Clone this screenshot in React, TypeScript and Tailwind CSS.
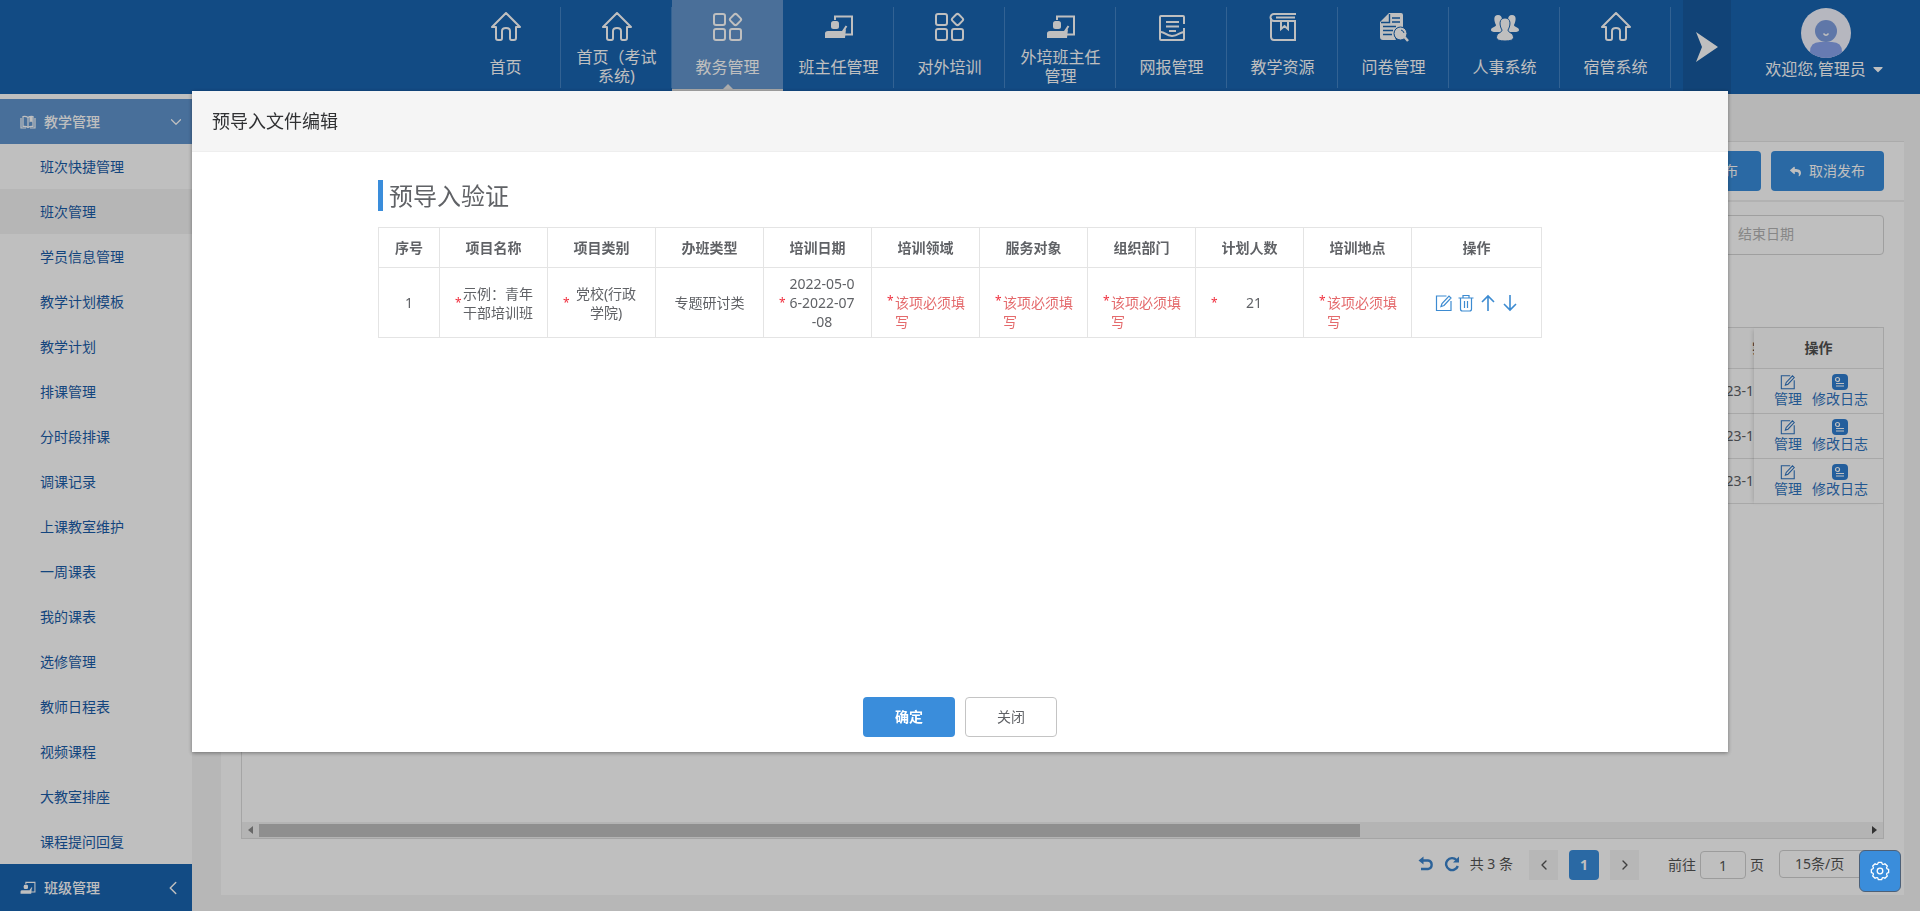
import type { ReactNode } from "react";
import { FaCaretDown, FaReply } from "react-icons/fa";
import { ChevronDown, ChevronLeft, ChevronRight } from "lucide-react";

const navItems = [
  { label: "首页", icon: <HomeIcon /> },
  { label: "首页（考试系统)", icon: <HomeIcon /> },
  { label: "教务管理", icon: <GridIcon />, active: true },
  { label: "班主任管理", icon: <TeacherIcon /> },
  { label: "对外培训", icon: <GridIcon /> },
  { label: "外培班主任管理", icon: <TeacherIcon /> },
  { label: "网报管理", icon: <ReportIcon /> },
  { label: "教学资源", icon: <BookIcon /> },
  { label: "问卷管理", icon: <SurveyIcon /> },
  { label: "人事系统", icon: <PeopleIcon /> },
  { label: "宿管系统", icon: <HomeIcon /> },
];

const menuItems = [
  "班次快捷管理",
  "班次管理",
  "学员信息管理",
  "教学计划模板",
  "教学计划",
  "排课管理",
  "分时段排课",
  "调课记录",
  "上课教室维护",
  "一周课表",
  "我的课表",
  "选修管理",
  "教师日程表",
  "视频课程",
  "大教室排座",
  "课程提问回复",
];

const columns = [
  "序号",
  "项目名称",
  "项目类别",
  "办班类型",
  "培训日期",
  "培训领域",
  "服务对象",
  "组织部门",
  "计划人数",
  "培训地点",
  "操作",
];

export default function App() {
  return (
    <div className="h-screen flex flex-col overflow-hidden bg-[#f4f4f4] text-sm text-[#606266] font-['Noto_Sans','Noto_Sans_CJK_SC',sans-serif]">
      <Header />
      <div className="flex flex-1 min-h-0">
        <Sidebar />
        <ClassList />
      </div>
      <div className="fixed inset-0 bg-black/25" />
      <ImportDialog />
      <button
        aria-label="设置"
        className="fixed right-[19px] bottom-[19px] w-[42px] h-[42px] flex items-center justify-center rounded-md border border-[#4c6078] bg-[#3a8ddb] text-white"
      >
        <GearIcon />
      </button>
    </div>
  );
}

function Header() {
  return (
    <header className="h-[94px] shrink-0 flex justify-end bg-[#1964b1] text-white text-base">
      <nav className="flex h-[91px]">
        {navItems.map((item, i) => (
          <a
            key={i}
            href="#"
            className={
              item.active
                ? "relative w-[111px] flex flex-col items-center pt-3 bg-[#6395cc] border-b-2 border-[#e4e4e4]"
                : "w-[111px] flex flex-col items-center pt-3 bg-[linear-gradient(#4383c4,#4383c4)] bg-[length:1px_81px] bg-[position:right_7px] bg-no-repeat"
            }
          >
            {item.icon}
            <span className="mt-1.5 h-[38px] px-3 flex items-center text-center leading-[19px]">
              {item.label}
            </span>
            {item.active && (
              <span className="absolute bottom-0 border-x-[5px] border-b-[5px] border-x-transparent border-b-[#e4e4e4]" />
            )}
          </a>
        ))}
      </nav>
      <button
        aria-label="更多"
        className="ml-3 w-12 flex items-center justify-center bg-[#175a9f]"
      >
        <svg width="22" height="30" viewBox="0 0 22 30" fill="#fff">
          <path d="M0 0 22 15 0 30 6 15Z" />
        </svg>
      </button>
      <div className="w-[189px] flex flex-col items-center pt-2">
        <Avatar />
        <button className="flex items-center gap-1 leading-[22px]">
          欢迎您,管理员
          <FaCaretDown size={16} />
        </button>
      </div>
    </header>
  );
}

function Sidebar() {
  return (
    <aside className="w-48 shrink-0 flex flex-col pt-[5px] bg-white text-[#1a5ca8]">
      <button className="h-[45px] shrink-0 flex items-center gap-2 pl-5 pr-[7px] bg-[#6094ce] text-white font-medium">
        <svg width="16" height="14" viewBox="0 0 16 14" fill="none" stroke="currentColor" strokeWidth="1.2">
          <path d="M8 12.5Q6 11 3 11.5V1.5Q6 1 8 2.5Q10 1 13 1.5V11.5Q10 11 8 12.5ZM8 2.500V12M1 3V13H6M15 3V13H10" />
          <path d="M9.5 2V7.500L11 6.500 12.5 7.500V1.500Z" fill="currentColor" stroke="none" />
        </svg>
        教学管理
        <ChevronDown size={18} strokeWidth={1.6} className="ml-auto" />
      </button>
      <ul>
        {menuItems.map((item) => (
          <li key={item}>
            <a
              href="#"
              className={
                item === "班次管理"
                  ? "h-[45px] flex items-center pl-10 bg-[#f3f3f3]"
                  : "h-[45px] flex items-center pl-10"
              }
            >
              {item}
            </a>
          </li>
        ))}
      </ul>
      <button className="flex-1 flex items-center gap-2 pl-5 pr-2 bg-[#1964b1] text-white font-medium">
        <TeacherIcon size={16} />
        班级管理
        <ChevronLeft size={22} strokeWidth={1.6} className="ml-auto" />
      </button>
    </aside>
  );
}

function ClassList() {
  return (
    <main className="flex-1 min-w-0 pt-[47px] pl-[29px] pr-4 pb-4 flex flex-col">
      <section className="flex-1 min-h-0 flex flex-col bg-white border-t border-[#e4e4e4]">
        <div className="flex justify-end gap-[10px] px-5 py-[9px] border-b-2 border-[#eeeeee]">
          <button className="h-10 px-[23px] flex items-center gap-2 rounded-sm bg-[#398ddb] text-white">
            <FaReply size={11} />
            发布
          </button>
          <button className="h-10 w-[113px] flex items-center justify-center gap-2 rounded-sm bg-[#398ddb] text-white">
            <FaReply size={11} />
            取消发布
          </button>
        </div>
        <div className="flex justify-end px-5 pt-[13px]">
          <input
            aria-label="结束日期"
            placeholder="结束日期"
            className="h-10 w-[220px] pl-[73px] pb-1 rounded border border-[#d4d4d4] placeholder:text-[#b4b4b4]"
          />
        </div>
        <div className="mx-5 mt-[72px] flex-1 min-h-0 flex flex-col border border-[#dcdcdc]">
          <div className="flex flex-1">
            <div className="flex-1 overflow-hidden">
              <table className="w-full text-right">
                <thead className="bg-[#fcfcfc]">
                  <tr className="h-10 border-b border-[#e0e0e0] text-[#505050]">
                    <th className="font-bold">
                      <div className="ml-auto w-0.5 overflow-hidden text-left">实</div>
                    </th>
                  </tr>
                </thead>
                <tbody>
                  {[1, 2, 3].map((n) => (
                    <tr key={n} className="h-[45px] border-b border-[#e0e0e0]">
                      <td>2023-1</td>
                    </tr>
                  ))}
                </tbody>
              </table>
            </div>
            <table className="w-[129px] self-start shadow-[-3px_0_4px_-2px_rgba(0,0,0,0.15)]">
              <thead className="bg-[#fcfcfc]">
                <tr className="h-10 border-b border-[#e0e0e0]">
                  <th className="font-bold text-[#505050]">操作</th>
                </tr>
              </thead>
              <tbody>
                {[1, 2, 3].map((n) => (
                  <tr key={n} className="h-[45px] border-b border-[#e0e0e0]">
                    <td className="pl-[5px]">
                      <div className="flex justify-center gap-[10px] text-[#2f74c0] leading-4">
                        <a href="#" className="flex flex-col items-center gap-px">
                          <EditIcon size={16} />
                          管理
                        </a>
                        <a href="#" className="flex flex-col items-center gap-px">
                          <LogIcon />
                          修改日志
                        </a>
                      </div>
                    </td>
                  </tr>
                ))}
              </tbody>
            </table>
          </div>
          <div className="h-4 flex items-center gap-[6px] px-[6px] bg-[#f1f1f1]">
            <svg width="5" height="8" viewBox="0 0 5 8" fill="#8a8a8a">
              <path d="M5 0V8L0 4Z" />
            </svg>
            <div className="flex-1">
              <div className="w-137/200 h-[13px] bg-[#bfbfbf]" />
            </div>
            <svg width="5" height="8" viewBox="0 0 5 8" fill="#444">
              <path d="M0 0V8L5 4Z" />
            </svg>
          </div>
        </div>
        <Pagination />
      </section>
    </main>
  );
}

function Pagination() {
  return (
    <div className="h-14 pt-[11px] px-5 flex justify-end items-start text-[#555]">
      <div className="h-7 flex items-center gap-[10px] text-[#3a83cc]">
        <svg width="16" height="16" viewBox="0 0 16 16" fill="none" stroke="currentColor" strokeWidth="2.4">
          <path d="M3 4.500H10A4.300 4.300 0 0 1 10 13H3" />
          <path d="M5.500 .5V8.500L.5 4.500Z" fill="currentColor" stroke="none" />
        </svg>
        <svg width="16" height="16" viewBox="0 0 16 16" fill="none" stroke="currentColor" strokeWidth="2.4">
          <path d="M12.500 4A6 6 0 1 0 13.800 10" />
          <path d="M15 .5V6.500H9Z" fill="currentColor" stroke="none" />
        </svg>
        <span className="text-[#555]">共 3 条</span>
      </div>
      <div className="ml-4 h-[30px] flex gap-[11px]">
        <button aria-label="上一页" className="w-[29px] flex items-center justify-center bg-[#f4f4f4]">
          <ChevronLeft size={16} />
        </button>
        <button className="w-[30px] rounded-sm bg-[#398ddb] text-white font-bold">1</button>
        <button aria-label="下一页" className="w-[29px] flex items-center justify-center bg-[#f4f4f4]">
          <ChevronRight size={16} />
        </button>
      </div>
      <label className="ml-[29px] h-[30px] flex items-center gap-1">
        前往
        <input
          defaultValue="1"
          className="w-[46px] h-7 rounded border border-[#d0d0d0] text-center"
        />
        页
      </label>
      <select
        aria-label="每页条数"
        className="ml-[15px] w-[105px] h-7 pl-[15px] appearance-none rounded border border-[#d0d0d0]"
      >
        <option>15条/页</option>
      </select>
    </div>
  );
}

function ImportDialog() {
  return (
    <div
      role="dialog"
      aria-labelledby="dialog-title"
      className="fixed top-[10vh] inset-x-0 mx-auto w-4/5 flex flex-col bg-white shadow-[0_1px_4px_rgba(0,0,0,0.4)]"
    >
      <h2
        id="dialog-title"
        className="h-[61px] px-5 flex items-center bg-[#f5f5f5] border-b border-[#eeeeee] text-lg text-[#303133]"
      >
        预导入文件编辑
      </h2>
      <div className="min-h-[545px] pt-7 flex flex-col items-center">
        <div className="w-[1164px] max-w-full">
          <h3 className="h-[31px] mb-4 flex items-center border-l-[5px] border-[#3a8ddb] pl-[6px] text-2xl">
            预导入验证
          </h3>
          <table className="w-full table-fixed border-collapse text-center leading-[19px]">
            <colgroup>
              <col className="w-[61px]" />
              {columns.slice(1, -1).map((c) => (
                <col key={c} />
              ))}
              <col className="w-[130px]" />
            </colgroup>
            <thead>
              <tr className="h-10">
                {columns.map((c) => (
                  <th key={c} className="border border-[#e4e4e4] font-bold">
                    {c}
                  </th>
                ))}
              </tr>
            </thead>
            <tbody>
              <tr className="h-[70px]">
                <Cell>1</Cell>
                <Cell>
                  <Required>示例：青年干部培训班</Required>
                </Cell>
                <Cell>
                  <Required>党校(行政学院)</Required>
                </Cell>
                <Cell>专题研讨类</Cell>
                <Cell>
                  <Required>
                    2022-05-0
                    <br />
                    6-2022-07
                    <br />
                    -08
                  </Required>
                </Cell>
                <Cell>
                  <Missing />
                </Cell>
                <Cell>
                  <Missing />
                </Cell>
                <Cell>
                  <Missing />
                </Cell>
                <Cell>
                  <Required>21</Required>
                </Cell>
                <Cell>
                  <Missing />
                </Cell>
                <Cell>
                  <div className="flex justify-center gap-1 text-[#3d8bd1]">
                    <button aria-label="编辑">
                      <EditIcon size={18} />
                    </button>
                    <button aria-label="删除">
                      <TrashIcon />
                    </button>
                    <button aria-label="上移">
                      <ArrowIcon d="M9 17V2M3 8 9 2 15 8" />
                    </button>
                    <button aria-label="下移">
                      <ArrowIcon d="M9 1V16M3 10 9 16 15 10" />
                    </button>
                  </div>
                </Cell>
              </tr>
            </tbody>
          </table>
        </div>
      </div>
      <div className="pb-[15px] flex justify-center gap-[10px]">
        <button className="w-[92px] h-10 rounded-sm bg-[#3a8ddb] text-white font-bold">确定</button>
        <button className="w-[92px] h-10 rounded-sm border border-[#c4c4c4]">关闭</button>
      </div>
    </div>
  );
}

function Cell({ children }: { children: ReactNode }) {
  return <td className="border border-[#e4e4e4]">{children}</td>;
}

function Required({ children }: { children: ReactNode }) {
  return (
    <div className="flex items-center pl-[15px]">
      <span className="w-2 shrink-0 text-xs text-left text-[#f02d3c]">*</span>
      <span className="w-[70px] break-all">{children}</span>
    </div>
  );
}

// the message hangs below the row's middle line when it wraps
function Missing() {
  return (
    <div className="flex items-start pl-[15px] h-[19px] text-[#e46a6c]">
      <span className="w-2 shrink-0 text-xs text-left text-[#f02d3c]">*</span>
      <span className="w-[70px] text-left">该项必须填写</span>
    </div>
  );
}

function HomeIcon() {
  return (
    <svg width="30" height="30" viewBox="0 0 30 30" fill="none" stroke="currentColor" strokeWidth="2" strokeLinejoin="round">
      <path d="M15 1 1 15H5V26Q5 28 7 28H9.5Q11 28 11 26V19Q11 16 15 16Q19 16 19 19V26Q19 28 20.5 28H23Q25 28 25 26V15H29Z" />
    </svg>
  );
}

function GridIcon() {
  return (
    <svg width="30" height="30" viewBox="0 0 30 30" fill="none" stroke="currentColor" strokeWidth="2">
      <rect x="1" y="2" width="11" height="11" rx="2" />
      <rect x="1" y="17" width="11" height="11" rx="2" />
      <rect x="17" y="17" width="11" height="11" rx="2" />
      <rect x="18" y="3" width="9" height="9" rx="2" transform="rotate(45 22.5 7.5)" />
    </svg>
  );
}

function TeacherIcon({ size = 30 }: { size?: number }) {
  return (
    <svg width={size} height={size} viewBox="0 0 30 30" fill="none" stroke="currentColor" strokeWidth="2">
      <path d="M11 8V4.500H28V22.500H20M22.500 14 18.500 20" />
      <rect x="7" y="9" width="8" height="8" rx="2.500" fill="currentColor" stroke="none" />
      <path d="M1 26V21.500Q1 19 4 19H19L22 17 21 26Z" fill="currentColor" stroke="none" />
    </svg>
  );
}

function ReportIcon() {
  return (
    <svg width="30" height="30" viewBox="0 0 30 30" fill="none" stroke="currentColor" strokeWidth="2">
      <path d="M27 12V5Q27 4 26 4H4Q3 4 3 5V27Q3 28 4 28H26Q27 28 27 27V16M9 10H22M9 14.500H22M12 19H19M4 20C8 20 9 24 15 24S23 20 27 20" />
    </svg>
  );
}

function BookIcon() {
  return (
    <svg width="30" height="30" viewBox="0 0 30 30" fill="none" stroke="currentColor" strokeWidth="2">
      <path d="M28 2H6A3.500 3.500 0 0 0 6 9H27V28H6Q3 28 3 25V6M8 5.500H27M13 10V17L16.500 14 20 17V10" />
    </svg>
  );
}

function SurveyIcon() {
  return (
    <svg width="30" height="30" viewBox="0 0 30 30" fill="currentColor">
      <path d="M10 1H22Q24 1 24 3V15Q15 15 15 23L17 28H4Q1 28 1 25V10Z" />
      <path d="M2 10.500H10.500V2M13 6H21M13 10H21M4 14.500H17M4 18.500H14M4 22.500H13" fill="none" stroke="#1964b1" strokeWidth="1.400" />
      <circle cx="21.500" cy="21.500" r="6.500" stroke="#1964b1" />
      <path d="M25.500 25 29 29" stroke="currentColor" strokeWidth="2.500" />
      <path d="M22 18A4 4 0 0 1 25 21" fill="none" stroke="#1964b1" />
    </svg>
  );
}

function PeopleIcon() {
  return (
    <svg width="30" height="30" viewBox="0 0 30 30" fill="currentColor">
      <path d="M8 3C3 3 4 9 6 13C6 15 1 15 1 18Q1 20 6 20H24Q29 20 29 18C29 15 24 15 24 13C26 9 27 3 22 3Q18 3 18 8H12Q12 3 8 3Z" />
      <path d="M15 6C9 6 9 13 12 18C12 21 6.500 20.500 6.500 25.500Q6.500 29 15 29T23.500 25.500C23.500 20.500 18 21 18 18C21 13 21 6 15 6Z" stroke="#1964b1" strokeWidth="1" />
    </svg>
  );
}

function Avatar() {
  return (
    <svg width="50" height="50" viewBox="0 0 50 50" className="shrink-0">
      <defs>
        <clipPath id="avatar-clip">
          <circle cx="25" cy="25" r="25" />
        </clipPath>
      </defs>
      <g clipPath="url(#avatar-clip)">
        <rect width="50" height="50" fill="#f3f5ff" />
        <path d="M9 50V44Q9 34 19 34H31Q41 34 41 44V50Z" fill="#8aa5ee" />
        <circle cx="25" cy="23" r="11" fill="#7f9fe0" />
        <path d="M22.500 25.500Q25 29 27.500 25.500" fill="none" stroke="#fff" strokeWidth="1.300" />
      </g>
    </svg>
  );
}

function EditIcon({ size }: { size: number }) {
  return (
    <svg width={size} height={size} viewBox="0 0 18 18" fill="none" stroke="currentColor" strokeWidth="1.200">
      <path d="M11.500 2H1.500V16.500H16V7M6 12.500 7 9.500 14 2 16 4 9 11.500Z" />
    </svg>
  );
}

function LogIcon() {
  return (
    <svg width="16" height="16" viewBox="0 0 16 16" fill="none" stroke="#fff" strokeWidth="1.200">
      <rect width="16" height="16" rx="4" fill="#2f7ed0" stroke="none" />
      <circle cx="5.500" cy="5.500" r="2" />
      <path d="M4 9.500H12M4 12H12" />
    </svg>
  );
}

function TrashIcon() {
  return (
    <svg width="18" height="18" viewBox="0 0 18 18" fill="none" stroke="currentColor" strokeWidth="1.200">
      <path d="M1.500 4H16.500M6 4V1.500H12V4M3.500 4V15Q3.500 17 5.500 17H12.500Q14.500 17 14.500 15V4M7.500 7V14M10.500 7V14" />
    </svg>
  );
}

function ArrowIcon({ d }: { d: string }) {
  return (
    <svg width="18" height="18" viewBox="0 0 18 18" fill="none" stroke="currentColor" strokeWidth="1.600">
      <path d={d} />
    </svg>
  );
}

function GearIcon() {
  // eight rounded teeth around the hub
  const point = (deg: number, r: number) => {
    const a = (deg * Math.PI) / 180;
    return `${(10 + r * Math.cos(a)).toFixed(2)} ${(10 + r * Math.sin(a)).toFixed(2)}`;
  };
  const teeth = [0, 45, 90, 135, 180, 225, 270, 315]
    .map((a) => `L${point(a - 11, 8.8)}L${point(a + 11, 8.8)}Q${point(a + 22, 5.8)} ${point(a + 34, 8.8)}`)
    .join("");
  return (
    <svg width="20" height="20" viewBox="0 0 20 20" fill="none" stroke="currentColor" strokeWidth="1.300" strokeLinejoin="round">
      <path d={`M${teeth.slice(1)}Z`} />
      <circle cx="10" cy="10" r="2.800" />
    </svg>
  );
}
